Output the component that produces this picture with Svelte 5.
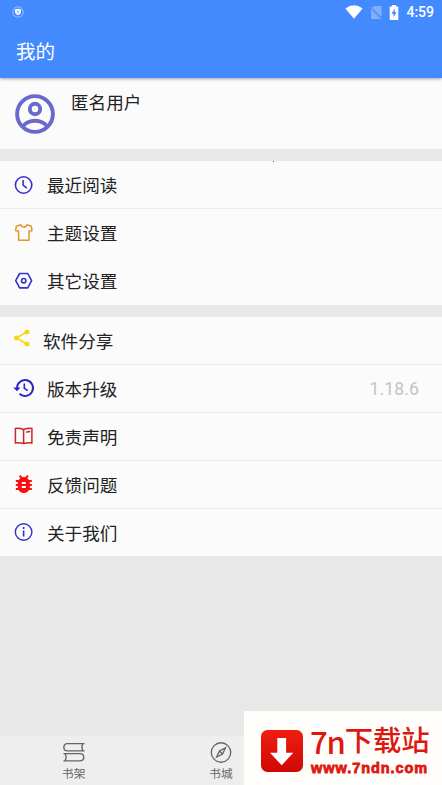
<script lang="ts">
  type Icon = 'clock' | 'shirt' | 'hexagon' | 'share' | 'history' | 'book' | 'bug' | 'info';
  type Item = { icon: Icon; label: string; color: string; value?: string; plain?: boolean };

  const groups: Item[][] = [
    [
      { icon: 'clock', label: '最近阅读', color: '#3632c8' },
      { icon: 'shirt', label: '主题设置', color: '#e0982f', plain: true },
      { icon: 'hexagon', label: '其它设置', color: '#3632c8' },
    ],
    [
      { icon: 'share', label: '软件分享', color: '#f2d91c' },
      { icon: 'history', label: '版本升级', color: '#2c25c4', value: '1.18.6' },
      { icon: 'book', label: '免责声明', color: '#cf2525' },
      { icon: 'bug', label: '反馈问题', color: '#fb0d0d' },
      { icon: 'info', label: '关于我们', color: '#3632c8' },
    ],
  ];
</script>

<div class="screen">
  <header>
    <div class="status">
      <svg class="shield" width="12" height="12" viewBox="0 0 12 12">
        <circle cx="6" cy="6" r="5.2" fill="none" stroke="#fff" stroke-opacity=".55" stroke-width=".8" />
        <path d="M3 3.2 6 2.8 9 3.2V6Q8.800 8.200 6 9.300 3.200 8.200 3 6Z" fill="#fff" />
        <path d="m4.800 4.600 1.200 1.300 1.200-1.300M6 5.900v1.500" fill="none" stroke="#448aff" stroke-width=".8" />
      </svg>
      <div class="indicators">
        <svg width="18" height="14" viewBox="0 0 18 14">
          <path d="M.4 3.500Q9-3.200 17.600 3.500L9 13.800Z" fill="#fff" />
        </svg>
        <svg class="sim" width="14" height="15" viewBox="0 0 14 15">
          <path d="M5 1h7.500v11L3 3ZM2 4.200 11.500 14H2Z" fill="#fff" opacity=".32" />
          <path d="m.8 2 12 12.200" stroke="#fff" stroke-opacity=".2" />
        </svg>
        <svg class="battery" width="10" height="15" viewBox="0 0 10 15">
          <path d="M3 0h4v1.500h2.300V15H.7V1.500H3Z" fill="#fff" />
          <path d="M6 3.500 2.500 8.700h2v3.500L7.600 7.200H5.700Z" fill="#448aff" />
        </svg>
        <span class="time">4:59</span>
      </div>
    </div>
    <h1>我的</h1>
  </header>

  <section class="profile">
    <svg width="40" height="40" viewBox="0 0 40 40" fill="none" stroke="#6a68cc" stroke-width="3.900">
      <circle cx="20" cy="20" r="17.900" />
      <circle cx="20" cy="15" r="5.200" />
      <path d="M7.500 32.500C11 28.300 15 26.700 20 26.700s9 1.600 12.500 5.800" />
    </svg>
    <span>匿名用户</span>
  </section>

  {#each groups as group}
    <section class="group">
      {#each group as item (item.label)}
        <div class="row" class:plain={item.plain} class:share={item.icon === 'share'}>
          <svg
            class="icon"
            width="22"
            height="20"
            viewBox="0 0 22 20"
            fill="none"
            stroke={item.color}
            stroke-width="1.600"
          >
            {#if item.icon === 'clock'}
              <circle cx="10.600" cy="10" r="8.200" />
              <path d="M10.100 5v5.200l3.700 3" />
            {:else if item.icon === 'shirt'}
              <path
                d="M7.600 1.700 3.300 3.200 2.600 7.700l3 .4v9.200h10.400V8.100l3-.4-.7-4.500-4.300-1.500C13.200 4.700 8.500 4.700 7.600 1.700Z"
                stroke-width="1.500"
                stroke-linejoin="round"
              />
            {:else if item.icon === 'hexagon'}
              <path d="M6.600 2.500h8.200l3.800 7.200-3.800 7.200H6.600L2.700 9.700Z" stroke-linejoin="round" />
              <circle cx="10.700" cy="9.700" r="2.200" />
            {:else if item.icon === 'share'}
              <path d="M14 3.500 3.700 10 14 16.300" stroke-width="1.600" />
              <g fill={item.color} stroke="none">
                <circle cx="14" cy="4" r="2.500" />
                <circle cx="3.500" cy="10" r="2.500" />
                <circle cx="14" cy="16" r="2.500" />
              </g>
            {:else if item.icon === 'history'}
              <path d="M4 10a8 8 0 1 1 2.500 5.800" stroke-width="1.900" />
              <path d="M.3 9.500h7.200L4 13.300Z" fill={item.color} stroke="none" />
              <path d="M11.300 5.500v4.800l3.500 2.400" />
            {:else if item.icon === 'book'}
              <path d="M10.600 3.500Q7 2 2.400 2.400v14.500Q7 16.500 10.600 17.500 15 16.500 18.900 16.900V2.400Q15 2 10.600 3.500Zm0 0v14M13.200 6.400q1.500-.8 4-.8" stroke-width="1.500" />
            {:else if item.icon === 'bug'}
              <g transform="translate(-1.200 -2)" fill={item.color} stroke="none">
                <path
                  d="M20 8h-2.810c-.45-.78-1.070-1.450-1.820-1.960L17 4.410 15.590 3l-2.170 2.170C12.960 5.060 12.490 5 12 5s-.96.060-1.410.17L8.410 3 7 4.410l1.620 1.630C7.880 6.550 7.260 7.220 6.810 8H4v2h2.090c-.05.33-.09.66-.09 1v1H4v2h2v1c0 .34.040.67.090 1H4v2h2.810c1.040 1.790 2.970 3 5.190 3s4.150-1.210 5.190-3H20v-2h-2.090c.05-.33.090-.66.090-1v-1h2v-2h-2v-1c0-.34-.04-.67-.09-1H20V8zm-6 8h-4v-2h4v2zm0-4h-4v-2h4v2z"
                />
              </g>
            {:else}
              <circle cx="10.600" cy="10" r="8.300" stroke-width="1.400" />
              <path d="M10.600 8.500v6M10.600 5v2" />
            {/if}
          </svg>
          <span class="label">{item.label}</span>
          {#if item.value}
            <span class="value">{item.value}</span>
          {/if}
        </div>
      {/each}
    </section>
  {/each}

  <nav>
    <div class="tab">
      <svg width="24" height="22" viewBox="0 0 24 22" fill="none" stroke="#666" stroke-width="1.500">
        <path d="M23 1.700H5C.2 1.700.2 9.300 5 9.300h18M21.500 1.700q-2.500 3.800 0 7.600M1 12.200h17c5.600 0 5.600 7.600 0 7.600H1M2.500 12.200q2.500 3.800 0 7.600" />
      </svg>
      <span>书架</span>
    </div>
    <div class="tab">
      <svg width="24" height="22" viewBox="0 0 24 22" fill="none" stroke="#666" stroke-width="1.400">
        <circle cx="12" cy="11" r="10.200" />
        <path d="m16.600 6.200-6.200 3.200-3 6.400 6.200-3.200Zm-6.200 3.200 3.200 3.200" />
      </svg>
      <span>书城</span>
    </div>
    <div class="tab"></div>
  </nav>

  <aside class="banner">
    <svg width="42" height="42" viewBox="0 0 42 42">
      <defs>
        <linearGradient id="red" x1="0" y1="0" x2="0" y2="1">
          <stop offset="0" stop-color="#f21d10" />
          <stop offset="1" stop-color="#cd0905" />
        </linearGradient>
      </defs>
      <rect width="42" height="42" rx="6.500" fill="url(#red)" />
      <path d="M16.300 8h8.800v14.700h7.200L20.700 35.300 9 22.700h7.300Z" fill="#fff" />
    </svg>
    <div class="brand">
      <div class="name"><span class="latin">7n</span><span>下载站</span></div>
      <div class="site">www.7ndn.com</div>
    </div>
  </aside>

  <i class="speck"></i>
</div>

<style>
  :global(body) {
    margin: 0;
  }
  .screen {
    position: relative;
    display: flex;
    flex-direction: column;
    width: 442px;
    height: 785px;
    overflow: hidden;
    background: #e8e8e8;
    color: #222;
    font-family: Roboto, 'Noto Sans CJK SC', sans-serif;
  }
  header {
    z-index: 1;
    height: 78px;
    flex: none;
    background: #448aff;
    color: #fff;
    box-shadow: 0 1px 3px rgba(0, 0, 0, 0.35);
  }
  .status {
    display: flex;
    justify-content: space-between;
    height: 24px;
    padding: 0 8px 0 12px;
    align-items: center;
  }
  .indicators {
    display: flex;
    align-items: center;
  }
  .sim {
    margin-left: 6px;
  }
  .battery {
    margin-left: 6px;
  }
  .time {
    margin-left: 7px;
    font-size: 14px;
    font-weight: 500;
    line-height: 25px;
  }
  h1 {
    margin: 0;
    padding: 2px 0 0 16px;
    font-size: 19.5px;
    font-weight: 400;
    line-height: 54px;
  }
  .profile {
    display: flex;
    flex: none;
    box-sizing: border-box;
    height: 71px;
    padding: 16px 15px 0;
    gap: 16px;
    background: #fbfbfb;
    font-size: 17.6px;
    line-height: 18px;
  }
  .group {
    flex: none;
    margin-top: 12px;
    background: #fbfbfb;
  }
  .row {
    display: flex;
    align-items: center;
    box-sizing: border-box;
    height: 48px;
    padding: 0 23px 0 13px;
    border-bottom: 1px solid #ececec;
  }
  .row.plain {
    border-bottom-color: transparent;
  }
  .row:last-child {
    height: 47px;
    border-bottom: 0;
  }
  .group:nth-of-type(2) .row:last-child {
    height: 48px;
  }
  .group + .group .icon {
    margin-bottom: 1px;
  }
  .group + .group .share .icon {
    margin-bottom: 6px;
  }
  .label {
    margin-left: 12px;
    padding-top: 2px;
    font-size: 17.6px;
    line-height: 24px;
  }
  .share .label {
    margin-left: 8px;
  }
  .value {
    margin-left: auto;
    padding-top: 1px;
    color: #c4c4c4;
    font-size: 17.6px;
    letter-spacing: 0.1px;
  }
  nav {
    display: flex;
    height: 49px;
    flex: none;
    margin-top: auto;
    background: #eee;
    color: #666;
  }
  .tab {
    display: flex;
    flex: 1;
    flex-direction: column;
    align-items: center;
    padding-top: 6px;
    font-size: 11.7px;
    line-height: 22px;
  }
  .banner {
    position: absolute;
    right: 0;
    bottom: 0;
    display: flex;
    box-sizing: border-box;
    width: 198px;
    height: 74px;
    padding: 19px 0 0 17px;
    background: #fffefa;
    color: #df1711;
  }
  .brand {
    margin-left: 7px;
    white-space: nowrap;
  }
  .name {
    display: flex;
    margin-top: -5px;
    font-size: 28.3px;
    font-weight: 500;
    line-height: 33px;
  }
  .latin {
    font-family: 'Noto Sans CJK SC', sans-serif;
    font-size: 31px;
    line-height: 32px;
    letter-spacing: -1.2px;
  }
  .site {
    margin: 4px 0 0 1px;
    font-family: 'Liberation Sans', Arial, sans-serif;
    font-size: 14.5px;
    font-weight: 700;
    line-height: 12px;
    -webkit-text-stroke: 0.8px #df1711;
    letter-spacing: 0.95px;
  }
  .speck {
    position: absolute;
    top: 161px;
    left: 273px;
    width: 1px;
    height: 1px;
    background: #444;
  }
</style>
